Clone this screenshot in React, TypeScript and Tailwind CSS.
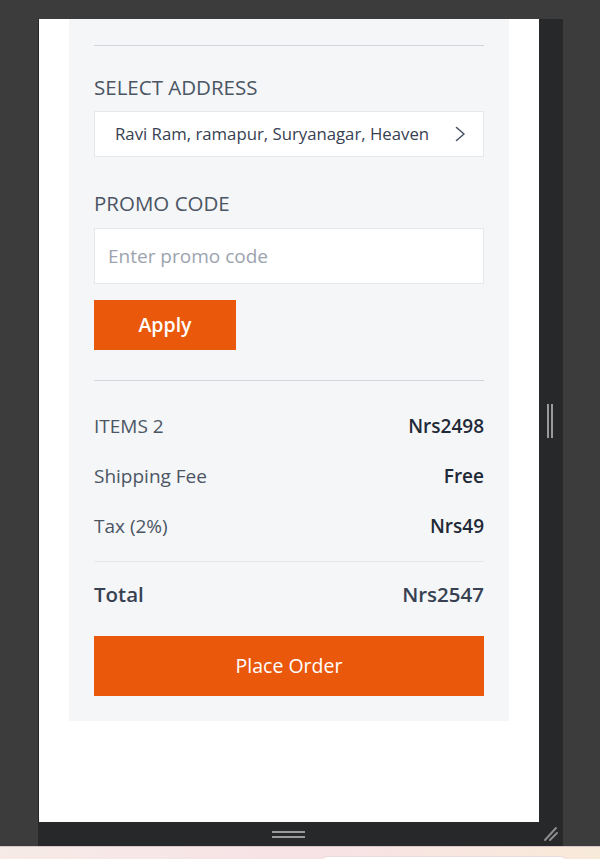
import React from 'react';

const rows = [
  { label: 'ITEMS 2', value: 'Nrs2498' },
  { label: 'Shipping Fee', value: 'Free' },
  { label: 'Tax (2%)', value: 'Nrs49' },
];

export default function App() {
  return (
    <div className="h-[859px] w-[600px] overflow-hidden bg-[#3c3c3c] font-['Open_Sans',sans-serif]">
      {/* Device frame */}
      <div className="pl-[38px] pt-[19px]">
        <div className="w-[525px] bg-[#27282a]">
          <div className="flex">
            <div className="ml-px h-[803px] w-[500px] overflow-hidden bg-white">
              {/* Checkout summary panel */}
              <div className="ml-[30px] w-[440px] bg-[#f5f6f8] px-[25px] pb-[25px] pt-[26px]">
                <div className="border-t border-[#d1d5db]" />

                <h2 className="mt-[27px] text-[20.5px] leading-[28px] text-[#4b5563]">SELECT ADDRESS</h2>
                <button className="mt-[10px] flex h-[46px] w-full items-center justify-between border border-[#e5e7eb] bg-white pl-[20px] pr-[17px] text-[16.75px] text-[#374151]">
                  <span>Ravi Ram, ramapur, Suryanagar, Heaven</span>
                  <svg width="11" height="16" viewBox="0 0 11 16" fill="none">
                    <path d="M1.5 1.5 L9 8 L1.5 14.5" stroke="#4b5563" strokeWidth="1.6" strokeLinecap="round" strokeLinejoin="round" />
                  </svg>
                </button>

                <h2 className="mt-[32px] text-[20.5px] leading-[28px] text-[#4b5563]">PROMO CODE</h2>
                <input
                  className="mt-[11px] block h-[56px] w-full border border-[#e5e7eb] bg-white px-[13px] text-[19px] text-[#374151] outline-none placeholder:text-[#9ca3af]"
                  placeholder="Enter promo code"
                />
                <button className="mt-[16px] h-[50px] w-[142px] bg-[#ea580c] text-[19.5px] font-semibold text-white">Apply</button>

                <div className="mt-[30px] border-t border-[#d1d5db]" />

                <div className="mt-[31px] flex flex-col gap-[22px]">
                  {rows.map((r) => (
                    <div key={r.label} className="flex items-center justify-between text-[19px] leading-[28px]">
                      <span className="text-[#4b5563]">{r.label}</span>
                      <span className="font-semibold text-[#1f2937]">{r.value}</span>
                    </div>
                  ))}
                </div>

                <div className="mt-[21px] border-t border-[#e5e7eb]" />

                <div className="mt-[16px] flex items-center justify-between text-[20.5px] font-semibold leading-[32px] text-[#374151]">
                  <span>Total</span>
                  <span>Nrs2547</span>
                </div>

                <button className="mt-[26px] h-[60px] w-full bg-[#ea580c] text-[19.5px] font-medium text-white">Place Order</button>
              </div>
            </div>

            {/* Side resize handle */}
            <div className="flex flex-1 items-center pl-[8px]">
              <div className="flex h-[34px] gap-[2px]">
                <div className="w-[2px] bg-[#9a9a9a]" />
                <div className="w-[2px] bg-[#9a9a9a]" />
              </div>
            </div>
          </div>

          {/* Bottom resize bar */}
          <div className="flex h-[24px] items-center">
            <div className="flex w-[501px] flex-col items-center gap-[3px]">
              <div className="h-[2px] w-[33px] bg-[#9a9a9a]" />
              <div className="h-[2px] w-[33px] bg-[#9a9a9a]" />
            </div>
            <svg width="16" height="16" viewBox="0 0 16 16" className="ml-[4px]">
              <path d="M2 14 L13 2 M7 14 L14 7" stroke="#8c8c8c" strokeWidth="2" strokeLinecap="round" />
            </svg>
          </div>
        </div>
      </div>

      {/* Page behind the frame */}
      <div className="h-[13px] border-t border-[#d8c8c8] bg-gradient-to-r from-[#f6ebe6] via-[#f7e2e6] to-[#f8ead9]">
        <div className="ml-[318px] mt-[9px] h-[10px] w-[252px] rounded-t-[10px] border border-[#eadada] bg-white" />
      </div>
    </div>
  );
}
